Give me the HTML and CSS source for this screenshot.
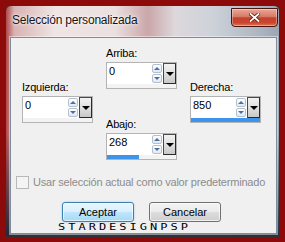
FILE: index.html
```html
<!DOCTYPE html>
<html lang="es">
<head>
  <meta charset="UTF-8">
  <title>Selección personalizada</title>
  <link rel="stylesheet" href="styles.css">
</head>
<body>

  <!-- Ventana del diálogo -->
  <div class="window">
    <div class="titlebar">
      <span class="title">Selección personalizada</span>
      <button type="button" class="close-btn">
        <svg width="11" height="9" viewBox="0 0 11 9">
          <path d="M1.5 1 L9.5 8 M9.5 1 L1.5 8" stroke="#5a1c14" stroke-width="3.4" stroke-linecap="square"/>
          <path d="M1.5 1 L9.5 8 M9.5 1 L1.5 8" stroke="#ffffff" stroke-width="1.8" stroke-linecap="square"/>
        </svg>
      </button>
    </div>

    <div class="client">
      <div class="fields">
        <div class="col col-side">
          <div class="field">
            <label class="field-label">Izquierda:</label>
            <div class="spin">
              <div class="spin-row">
                <span class="spin-value">0</span>
                <span class="spin-arrows"><span class="arrow up"></span><span class="arrow down"></span></span>
                <span class="spin-drop"></span>
              </div>
              <div class="spin-bar"><div class="spin-fill" style="width:0%"></div></div>
            </div>
          </div>
        </div>

        <div class="col col-mid">
          <div class="field">
            <label class="field-label">Arriba:</label>
            <div class="spin">
              <div class="spin-row">
                <span class="spin-value">0</span>
                <span class="spin-arrows"><span class="arrow up"></span><span class="arrow down"></span></span>
                <span class="spin-drop"></span>
              </div>
              <div class="spin-bar"><div class="spin-fill" style="width:0%"></div></div>
            </div>
          </div>
          <div class="field field-low">
            <label class="field-label">Abajo:</label>
            <div class="spin">
              <div class="spin-row">
                <span class="spin-value">268</span>
                <span class="spin-arrows"><span class="arrow up"></span><span class="arrow down"></span></span>
                <span class="spin-drop"></span>
              </div>
              <div class="spin-bar"><div class="spin-fill" style="width:46%"></div></div>
            </div>
          </div>
        </div>

        <div class="col col-side">
          <div class="field">
            <label class="field-label">Derecha:</label>
            <div class="spin">
              <div class="spin-row">
                <span class="spin-value">850</span>
                <span class="spin-arrows"><span class="arrow up"></span><span class="arrow down"></span></span>
                <span class="spin-drop"></span>
              </div>
              <div class="spin-bar"><div class="spin-fill" style="width:100%"></div></div>
            </div>
          </div>
        </div>
      </div>

      <div class="check-row">
        <span class="checkbox"></span>
        <span class="check-text">Usar selección actual como valor predeterminado</span>
      </div>

      <div class="buttons">
        <button type="button" class="btn btn-default">Aceptar</button>
        <button type="button" class="btn">Cancelar</button>
      </div>

      <div class="watermark">STARDESIGNPSP</div>
    </div>
  </div>

</body>
</html>
```

FILE: styles.css
```css
* {
  margin: 0;
  padding: 0;
  box-sizing: border-box;
}

body {
  width: 285px;
  height: 242px;
  overflow: hidden;
  padding: 5px;
  background-color: #8c0a0a;
  font-family: "Liberation Sans", Arial, sans-serif;
  font-size: 11px;
  color: #000;
}

.window {
  width: 275px;
  height: 232px;
  border: 1px solid #2e3138;
  border-radius: 6px 6px 0 0;
  display: flex;
  flex-direction: column;
  background:
    linear-gradient(180deg, rgba(255,255,255,0) 0%, rgba(255,255,255,0) 55%, rgba(24,34,50,0.9) 100%),
    linear-gradient(90deg, #b04848 0%, #d8b2b2 3%, #efe5e5 18%, #ebdfdf 40%, #caa6a9 52%, #ddd8dc 62%, #cdd2d9 76%, #b2bac5 90%, #9ca6b3 100%);
}

.titlebar {
  height: 31px;
  display: flex;
  align-items: flex-start;
  padding-left: 6px;
}

.title {
  margin-top: 7px;
  font-size: 12px;
  line-height: 14px;
  letter-spacing: -0.2px;
  color: #141414;
  text-shadow: 0 0 5px #fff, 0 0 2px #fff;
}

.close-btn {
  margin-left: auto;
  margin-top: 2px;
  margin-right: 1px;
  width: 47px;
  height: 19px;
  border: 1px solid #4a1410;
  border-radius: 0 0 4px 4px;
  background: linear-gradient(180deg, #e9a898 0%, #d67a66 45%, #c4412c 52%, #c9452e 80%, #dc7a58 100%);
  box-shadow: inset 0 0 0 1px rgba(255,255,255,0.35);
  display: flex;
  align-items: center;
  justify-content: center;
}

.client {
  width: 267px;
  height: 197px;
  margin-left: 4px;
  background-color: #f0f0f0;
  border: 1px solid #7e8c9e;
  box-shadow: 0 0 0 1px rgba(255,255,255,0.45);
  display: flex;
  flex-direction: column;
  overflow: hidden;
}

/* campos */
.fields {
  display: flex;
  gap: 13px;
  padding-left: 11px;
}

.col {
  width: 71px;
  display: flex;
  flex-direction: column;
}

.col-side {
  margin-top: 43px;
}

.col-mid {
  margin-top: 9px;
}

.field-low {
  margin-top: 29px;
}

.field-label {
  display: block;
  height: 13px;
  line-height: 13px;
  margin-bottom: 2px;
  letter-spacing: -0.2px;
}

.spin {
  width: 71px;
  height: 27px;
  border: 1px solid #b4b4b4;
  background-color: #fff;
  display: flex;
  flex-direction: column;
}

.spin-row {
  height: 21px;
  display: flex;
}

.spin-value {
  flex: 1;
  padding: 2px 0 0 2px;
  line-height: 13px;
}

.spin-arrows {
  width: 11px;
  padding-top: 1px;
  display: flex;
  flex-direction: column;
  gap: 1px;
}

.arrow {
  width: 10px;
  height: 9px;
  border: 1px solid #b3c0d2;
  border-radius: 2px;
  background: linear-gradient(180deg, #ffffff 0%, #e2e9f2 100%);
  display: flex;
  align-items: center;
  justify-content: center;
}

.arrow::before {
  content: "";
  border-left: 3px solid transparent;
  border-right: 3px solid transparent;
}

.arrow.up::before {
  border-bottom: 3px solid #4c6ea8;
}

.arrow.down::before {
  border-top: 3px solid #4c6ea8;
}

.spin-drop {
  width: 13px;
  border: 1px solid #4a4a4a;
  border-right-color: #2a2a2a;
  border-bottom-color: #2a2a2a;
  background: linear-gradient(180deg, #f2f2f2 0%, #dedede 55%, #c8c8c8 100%);
  display: flex;
  align-items: center;
  justify-content: center;
}

.spin-drop::before {
  content: "";
  border-left: 4px solid transparent;
  border-right: 4px solid transparent;
  border-top: 4px solid #000;
}

.spin-bar {
  height: 4px;
  background-color: #f3f3f3;
}

.spin-fill {
  height: 100%;
  background-color: #3d94ea;
}

/* casilla */
.check-row {
  margin-top: 16px;
  padding-left: 5px;
  display: flex;
  align-items: center;
  gap: 4px;
  height: 13px;
}

.checkbox {
  width: 13px;
  height: 13px;
  border: 1px solid #b8b8b8;
  background-color: #f4f4f4;
}

.check-text {
  line-height: 13px;
  color: #8c8c8c;
  letter-spacing: -0.2px;
}

/* botones */
.buttons {
  margin-top: 13px;
  padding-left: 51px;
  display: flex;
  gap: 15px;
}

.btn {
  width: 72px;
  height: 20px;
  border: 1px solid #707070;
  border-radius: 3px;
  font-family: "Liberation Sans", Arial, sans-serif;
  font-size: 11px;
  color: #000;
  background: linear-gradient(180deg, #f3f3f3 0%, #ebebeb 48%, #dddddd 52%, #cfcfcf 100%);
  box-shadow: inset 0 0 0 1px rgba(255,255,255,0.7);
}

.btn-default {
  border-color: #3c7fb1;
  background: linear-gradient(180deg, #eaf6fd 0%, #d9f0fc 48%, #bee6fd 52%, #a7d9f5 100%);
  box-shadow: inset 0 0 0 1px rgba(255,255,255,0.6), 0 0 2px rgba(90,170,230,0.6);
}

.watermark {
  align-self: flex-start;
  margin-top: 2px;
  margin-left: 47px;
  font-family: "DejaVu Sans Mono", monospace;
  font-size: 8px;
  line-height: 7px;
  letter-spacing: 2px;
  transform: scaleX(1.5);
  transform-origin: left center;
  color: #000;
}
```
